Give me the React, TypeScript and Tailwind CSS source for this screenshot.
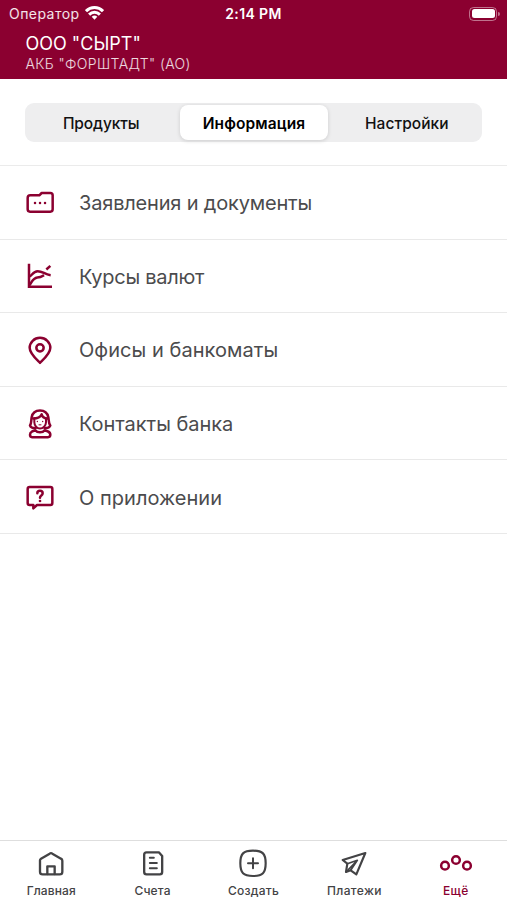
import React from "react";

const stroke = {
  fill: "none",
  stroke: "currentColor",
  strokeLinecap: "round" as const,
  strokeLinejoin: "round" as const,
};

const FolderIcon = () => (
  <svg viewBox="30 20 90 96" className="h-8 w-[30px]" {...stroke} strokeWidth="7.5">
    <path d="M46 45H73L80 38H106Q113 38 113 45V87Q113 94 106 94H45Q38 94 38 87V53Q38 45 46 45Z" />
    <path d="M60 68h.1M75 68h.1M90 68h.1" strokeWidth="7.5" />
  </svg>
);

const RatesIcon = () => (
  <svg viewBox="30 24.6 90 96" className="h-8 w-[30px]" {...stroke} strokeWidth="7.5" strokeLinecap="butt">
    <path d="M42 36V105H111" strokeLinejoin="miter" />
    <path d="M43 74C52 72 53 58 68 58C84 58 88 68 107 70" />
    <path d="M43 100C50 94 52 79 67 77C78 77 78 76 87 70" />
    <path d="M94 53L106 42" />
  </svg>
);

const PinIcon = () => (
  <svg viewBox="30 26.4 90 96" className="h-8 w-[30px]" {...stroke} strokeWidth="7.5">
    <path d="M75 113C66 104 44 86 44 68A31 30 0 0 1 106 68C106 86 84 104 75 113Z" />
    <circle cx="75" cy="68" r="11" />
  </svg>
);

const ContactIcon = () => (
  <svg viewBox="30 22.5 90 96" className="h-8 w-[30px]" {...stroke} strokeWidth="7.5">
    <path d="M63 82C54 84 46 80 45 75C50 68 48 60 50 50C53 35 63 30 75 30C89 30 97 36 100 50C102 60 100 68 106 75C103 81 96 84 88 82" />
    <path d="M58 53V65C58 75 66 84 75 84S93 75 93 65V53" strokeWidth="6" />
    <path d="M55 54C67 54 76 50 80 42C82 49 88 53 96 54" strokeWidth="8" />
    <path d="M67 63h.1M83 63h.1" strokeWidth="4" />
    <path d="M72 73h6" strokeWidth="3" />
    <path d="M61 89L51 93Q45 96 45 103Q45 110 51 110H99Q106 110 106 103Q106 96 99 93L89 89C83 97 67 97 61 89Z" />
  </svg>
);

const AboutIcon = () => (
  <svg viewBox="30 24 90 96" className="h-8 w-[30px]" {...stroke} strokeWidth="7.5">
    <path d="M44 42H106Q112 42 112 48V90Q112 96 106 96H66L55 106V96H44Q38 96 38 90V48Q38 42 44 42Z" />
    <path d="M67 61C67 51 83 51 83 61C83 68 75 67 75 74" />
    <path d="M75 84h.1" strokeWidth="8" />
  </svg>
);

const HomeIcon = () => (
  <svg viewBox="108 54 90 90" className="size-[30px]" {...stroke} strokeWidth="7">
    <path d="M120 91Q120 88 123 86L149 71Q153 68 157 71L183 86Q187 88 187 92V125Q187 133 179 133H128Q120 133 120 125Z" />
    <path d="M142 132V109H164V132" />
  </svg>
);

const BillIcon = () => (
  <svg viewBox="412.5 54 90 90" className="size-[30px]" {...stroke} strokeWidth="7">
    <path d="M438 67H475L485 78V126Q485 133 478 133H438Q431 133 431 126V74Q431 67 438 67Z" />
    <path d="M448 83H460M448 99H469M448 115H469" strokeWidth="6" />
  </svg>
);

const CreateIcon = () => (
  <svg viewBox="-45 -46 90 90" className="size-[30px]" {...stroke} strokeWidth="6.5">
    <path d="M0-38C29-38 38-29 38 0S29 38 0 38S-38 29-38 0S-29-38 0-38Z" />
    <path d="M-15 0H15M0-15V15" strokeWidth="6" />
  </svg>
);

const SendIcon = () => (
  <svg viewBox="268 54 90 90" className="size-[30px]" {...stroke} strokeWidth="6.5">
    <path d="M347 69L279 90L293 101L289 126L303 121L320 133Z" />
    <path d="M293 101L323 91L303 121M323 91L289 126" strokeWidth="5" />
  </svg>
);

const MoreIcon = () => (
  <svg viewBox="567 54 102 90" className="h-[30px] w-[34px]" {...stroke} strokeWidth="7.5">
    <circle cx="585" cy="107" r="11.5" />
    <circle cx="618" cy="90" r="11.5" />
    <circle cx="651" cy="107" r="11.5" />
  </svg>
);

const rows = [
  { label: "Заявления и документы", Icon: FolderIcon, cls: "tracking-[-0.18px]" },
  { label: "Курсы валют", Icon: RatesIcon, cls: "tracking-[-0.28px]" },
  { label: "Офисы и банкоматы", Icon: PinIcon, cls: "tracking-[0.05px]" },
  { label: "Контакты банка", Icon: ContactIcon, cls: "tracking-[-0.04px]" },
  { label: "О приложении", Icon: AboutIcon, cls: "tracking-[0.03px]" },
];

const tabs = [
  { label: "Главная", Icon: HomeIcon, active: false, cls: "pl-px tracking-[0.1px]" },
  { label: "Счета", Icon: BillIcon, active: false, cls: "pl-px tracking-[0.2px]" },
  { label: "Создать", Icon: CreateIcon, active: false, cls: "tracking-[0.25px]" },
  { label: "Платежи", Icon: SendIcon, active: false, cls: "pr-px tracking-[0.35px]" },
  { label: "Ещё", Icon: MoreIcon, active: true, cls: "pr-px tracking-[0.4px]" },
];

export default function App() {
  return (
    <div className="flex h-[900px] w-[507px] flex-col overflow-hidden bg-white font-['Inter','Liberation_Sans',sans-serif]">
      <header className="h-[79px] shrink-0 bg-[#8b0030] text-white">
        <div className="grid h-[27px] grid-cols-3 items-center pr-[7px] pl-[9px]">
          <div className="flex items-center gap-[5px] text-[14px] tracking-[0.45px] text-white/90">
            <span>Оператор</span>
            <svg viewBox="0 0 19 14" className="mb-0.5 h-3.5 w-[19px] text-white" {...stroke} strokeWidth="3" strokeLinecap="butt">
              <path d="M1 5.2C5.8.4 13.2.4 18 5.2" />
              <path d="M4.1 8.6C7.2 5.6 11.8 5.6 14.9 8.6" />
              <path d="M6.7 10.8Q9.5 8.4 12.3 10.8L9.5 13.7Z" fill="currentColor" stroke="none" />
            </svg>
          </div>
          <span className="-ml-0.5 text-center text-[14px] font-semibold tracking-[0.4px]">2:14 PM</span>
          <div className="flex items-center justify-end gap-px">
            <div className="h-[14px] w-7 rounded-[4.5px] border border-white/45 p-[1.5px]">
              <div className="h-full rounded-[2.5px] bg-white" />
            </div>
            <div className="h-1 w-0.5 rounded-r-full bg-white/45" />
          </div>
        </div>
        <div className="pt-[7px] pl-[25.5px]">
          <h1 className="text-[18px] leading-5 font-normal">ООО "СЫРТ"</h1>
          <p className="text-[14px] leading-5 font-light tracking-[0.38px] text-white/85">АКБ "ФОРШТАДТ" (АО)</p>
        </div>
      </header>

      <div className="flex h-[87px] shrink-0 items-center border-b border-[#ebebeb] px-[25px] pt-px">
        <div className="grid h-[39px] w-full grid-cols-3 items-center rounded-[9px] bg-[#eeeeef] text-center text-[15.5px] font-medium text-[#111]">
          <span className="pt-0.5 tracking-[-0.1px]">Продукты</span>
          <span className="mr-[2px] ml-[3px] flex h-[35px] items-center justify-center rounded-lg bg-white pt-0.5 font-semibold tracking-[0.1px] text-black shadow-[0_1px_4px_rgba(0,0,0,0.14)]">
            Информация
          </span>
          <span className="pt-0.5 pl-0.5 tracking-[0.05px]">Настройки</span>
        </div>
      </div>

      <main className="flex-1">
        {rows.map(({ label, Icon, cls }) => (
          <div key={label} className="flex h-[73.6px] items-center border-b border-[#e9e9e9] pt-px pl-[25px] text-[#8b0030]">
            <Icon />
            <span className={`ml-6 pt-px text-[20px] text-[#4b4b4d] ${cls}`}>{label}</span>
          </div>
        ))}
      </main>

      <nav className="grid h-[60px] shrink-0 grid-cols-5 border-t border-[#dedede]">
        {tabs.map(({ label, Icon, active, cls }) => (
          <div key={label} className={`flex flex-col items-center pt-[7px] ${cls} ${active ? "text-[#8b0030]" : "text-[#434345]"}`}>
            <Icon />
            <span className="mt-[5px] text-[12px] leading-4 font-medium">{label}</span>
          </div>
        ))}
      </nav>
    </div>
  );
}
